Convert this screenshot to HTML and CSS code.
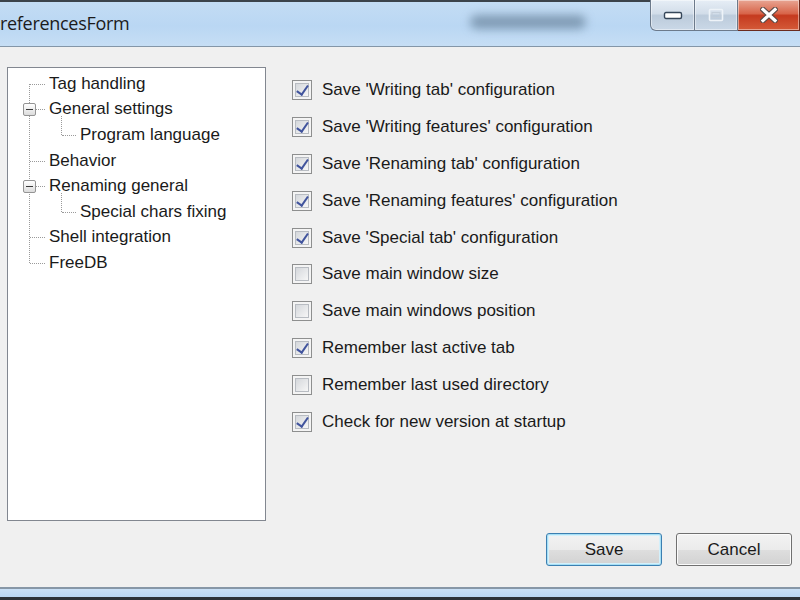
FILE: index.html
```html
<!DOCTYPE html>
<html lang="en">
<head>
  <meta charset="UTF-8" />
  <title>PreferencesForm</title>
  <link rel="stylesheet" href="styles.css">
</head>
<body>
  <div class="window">
    <div class="titlebar">
      <span class="title">referencesForm</span>
      <span class="glass-blur"></span>
      <div class="caption-buttons">
        <button class="cap min">
          <svg width="20" height="9" viewBox="0 0 20 9"><rect x="1.5" y="1.5" width="17" height="6" rx="1.5" fill="#fff" stroke="#36475a" stroke-width="1.4"/></svg>
        </button>
        <button class="cap max">
          <svg width="16" height="14" viewBox="0 0 16 14"><rect x="1.5" y="1.5" width="13" height="11" rx="1" fill="none" stroke="#eef3f8" stroke-width="1.6"/><rect x="4" y="4.5" width="8" height="5" fill="none" stroke="#c3ceda" stroke-width="1"/></svg>
        </button>
        <button class="cap close">
          <svg width="18" height="16" viewBox="0 0 18 16">
            <path d="M3 2.5 L15 13.5 M15 2.5 L3 13.5" stroke="#5a4a46" stroke-width="5.5" stroke-linecap="square"/>
            <path d="M3 2.5 L15 13.5 M15 2.5 L3 13.5" stroke="#fff" stroke-width="3.2" stroke-linecap="square"/>
          </svg>
        </button>
      </div>
    </div>

    <div class="client">
      <div class="main">
        <div class="tree-box">
          <ul class="tree">
            <li><div class="row">Tag handling</div></li>
            <li>
              <div class="row"><span class="toggle"></span>General settings</div>
              <ul class="sub">
                <li><div class="row">Program language</div></li>
              </ul>
            </li>
            <li><div class="row">Behavior</div></li>
            <li>
              <div class="row"><span class="toggle"></span>Renaming general</div>
              <ul class="sub">
                <li><div class="row">Special chars fixing</div></li>
              </ul>
            </li>
            <li><div class="row">Shell integration</div></li>
            <li><div class="row">FreeDB</div></li>
          </ul>
        </div>

        <div class="options">
          <label class="option"><span class="check on"></span>Save 'Writing tab' configuration</label>
          <label class="option"><span class="check on"></span>Save 'Writing features' configuration</label>
          <label class="option"><span class="check on"></span>Save 'Renaming tab' configuration</label>
          <label class="option"><span class="check on"></span>Save 'Renaming features' configuration</label>
          <label class="option"><span class="check on"></span>Save 'Special tab' configuration</label>
          <label class="option"><span class="check"></span>Save main window size</label>
          <label class="option"><span class="check"></span>Save main windows position</label>
          <label class="option"><span class="check on"></span>Remember last active tab</label>
          <label class="option"><span class="check"></span>Remember last used directory</label>
          <label class="option"><span class="check on"></span>Check for new version at startup</label>
        </div>
      </div>

      <div class="footer">
        <button class="btn default">Save</button>
        <button class="btn">Cancel</button>
      </div>
    </div>

    <div class="frame-bottom"></div>
  </div>
</body>
</html>
```

FILE: styles.css
```css
* {
  box-sizing: border-box;
}

body {
  margin: 0;
  width: 800px;
  height: 600px;
  overflow: hidden;
  background: #f0f0f0;
  font-family: "Liberation Sans", Arial, sans-serif;
  color: #1a1a1a;
}

.window {
  display: flex;
  flex-direction: column;
  height: 600px;
}

/* Title bar (Aero glass) */
.titlebar {
  position: relative;
  height: 47px;
  flex: none;
  display: flex;
  align-items: flex-start;
  border-top: 2px solid #3b434b;
  border-bottom: 1px solid #8496a8;
  background: linear-gradient(to bottom, #c3dcf4 0%, #bad7f3 55%, #c6def5 100%);
}

.title {
  margin-top: 9px;
  font-family: "Open Sans", "Noto Sans", sans-serif;
  font-size: 18px;
  letter-spacing: -0.3px;
  color: #1b1b1b;
}

.glass-blur {
  position: absolute;
  left: 470px;
  top: 13px;
  width: 116px;
  height: 14px;
  border-radius: 8px;
  background: rgba(70, 95, 120, 0.5);
  filter: blur(5px);
}

.caption-buttons {
  display: flex;
  margin-left: auto;
  margin-top: -2px;
}

.cap {
  height: 31px;
  padding: 0;
  display: flex;
  justify-content: center;
  align-items: center;
  border: 1px solid #6c7a8b;
  border-top: none;
  background: linear-gradient(to bottom, #e6eef6 0%, #d2dde9 45%, #bccbdb 52%, #cad8e7 100%);
  box-shadow: inset 0 0 0 1px rgba(255, 255, 255, 0.45);
}

.cap.min {
  width: 45px;
  border-bottom-left-radius: 6px;
}

.cap.max {
  width: 43px;
  border-left: none;
}

.cap.close {
  width: 62px;
  border-left: none;
  border-color: #6b2b1e;
  background: linear-gradient(to bottom, #e8a593 0%, #d8654a 45%, #c53a1f 52%, #d45a38 100%);
}

/* Client area */
.client {
  flex: 1;
  display: flex;
  flex-direction: column;
  padding: 20px 8px 0 7px;
}

.main {
  display: flex;
  height: 454px;
}

.tree-box {
  width: 259px;
  height: 454px;
  border: 1px solid #828790;
  background: #fff;
}

.tree,
.tree .sub {
  list-style: none;
  margin: 0;
  padding: 0;
}

.tree {
  position: relative;
  padding-top: 3px;
}

.tree::before {
  content: "";
  position: absolute;
  left: 21px;
  top: 16px;
  bottom: 13px;
  border-left: 1px dotted #9a9a9a;
}

.row {
  position: relative;
  height: 25.6px;
  display: flex;
  align-items: center;
  padding-left: 41px;
  font-size: 17px;
  white-space: nowrap;
}

.row::before {
  content: "";
  position: absolute;
  left: 22px;
  width: 15px;
  top: 50%;
  border-top: 1px dotted #9a9a9a;
}

.sub .row {
  padding-left: 72px;
}

.sub .row::before {
  left: 54px;
  width: 14px;
}

.sub .row::after {
  content: "";
  position: absolute;
  left: 53px;
  top: -6px;
  height: calc(50% + 6px);
  border-left: 1px dotted #9a9a9a;
}

.toggle {
  position: absolute;
  z-index: 1;
  left: 15px;
  top: 50%;
  margin-top: -6px;
  width: 13px;
  height: 13px;
  border: 1px solid #949494;
  border-radius: 2px;
  background: linear-gradient(to bottom, #ffffff, #dcdcdc);
}

.toggle::after {
  content: "";
  position: absolute;
  left: 2px;
  top: 5px;
  width: 7px;
  height: 1px;
  background: #3a3a3a;
}

.options {
  margin-left: 26px;
  padding-top: 5px;
}

.option {
  height: 36.8px;
  display: flex;
  align-items: center;
  gap: 10px;
  font-size: 17px;
  white-space: nowrap;
}

.check {
  position: relative;
  width: 20px;
  height: 20px;
  border: 1px solid #8e8f8f;
  background: #f4f4f4;
  box-shadow: inset 0 0 0 2px #f4f4f4, inset 0 0 0 3px #b8bcc2;
  background-image: linear-gradient(135deg, #d4d7db 15%, #f7f7f7 85%);
}

.check.on::after {
  content: "";
  position: absolute;
  left: 6px;
  top: 2px;
  width: 5px;
  height: 10px;
  border-right: 2.5px solid #41549d;
  border-bottom: 2.5px solid #41549d;
  transform: rotate(35deg);
}

/* Buttons */
.footer {
  display: flex;
  justify-content: flex-end;
  gap: 14px;
  margin-top: 12px;
}

.btn {
  width: 116px;
  height: 33px;
  padding: 0;
  font-family: "Liberation Sans", Arial, sans-serif;
  font-size: 17px;
  color: #1a1a1a;
  border: 1px solid #707070;
  border-radius: 3px;
  background: linear-gradient(to bottom, #f3f3f3 0%, #ebebeb 50%, #dedede 51%, #d2d2d2 100%);
  box-shadow: inset 0 0 0 1px #fbfbfb;
}

.btn.default {
  border-color: #3c7fb1;
  box-shadow: inset 0 0 0 1px #a6dff5, inset 0 0 0 2px #d4f0fb;
}

.frame-bottom {
  height: 13px;
  flex: none;
  border-top: 2px solid #8797a7;
  border-bottom: 3px solid #2c3238;
  background: linear-gradient(to bottom, #c9e0f6, #b9d6f2);
}
```
